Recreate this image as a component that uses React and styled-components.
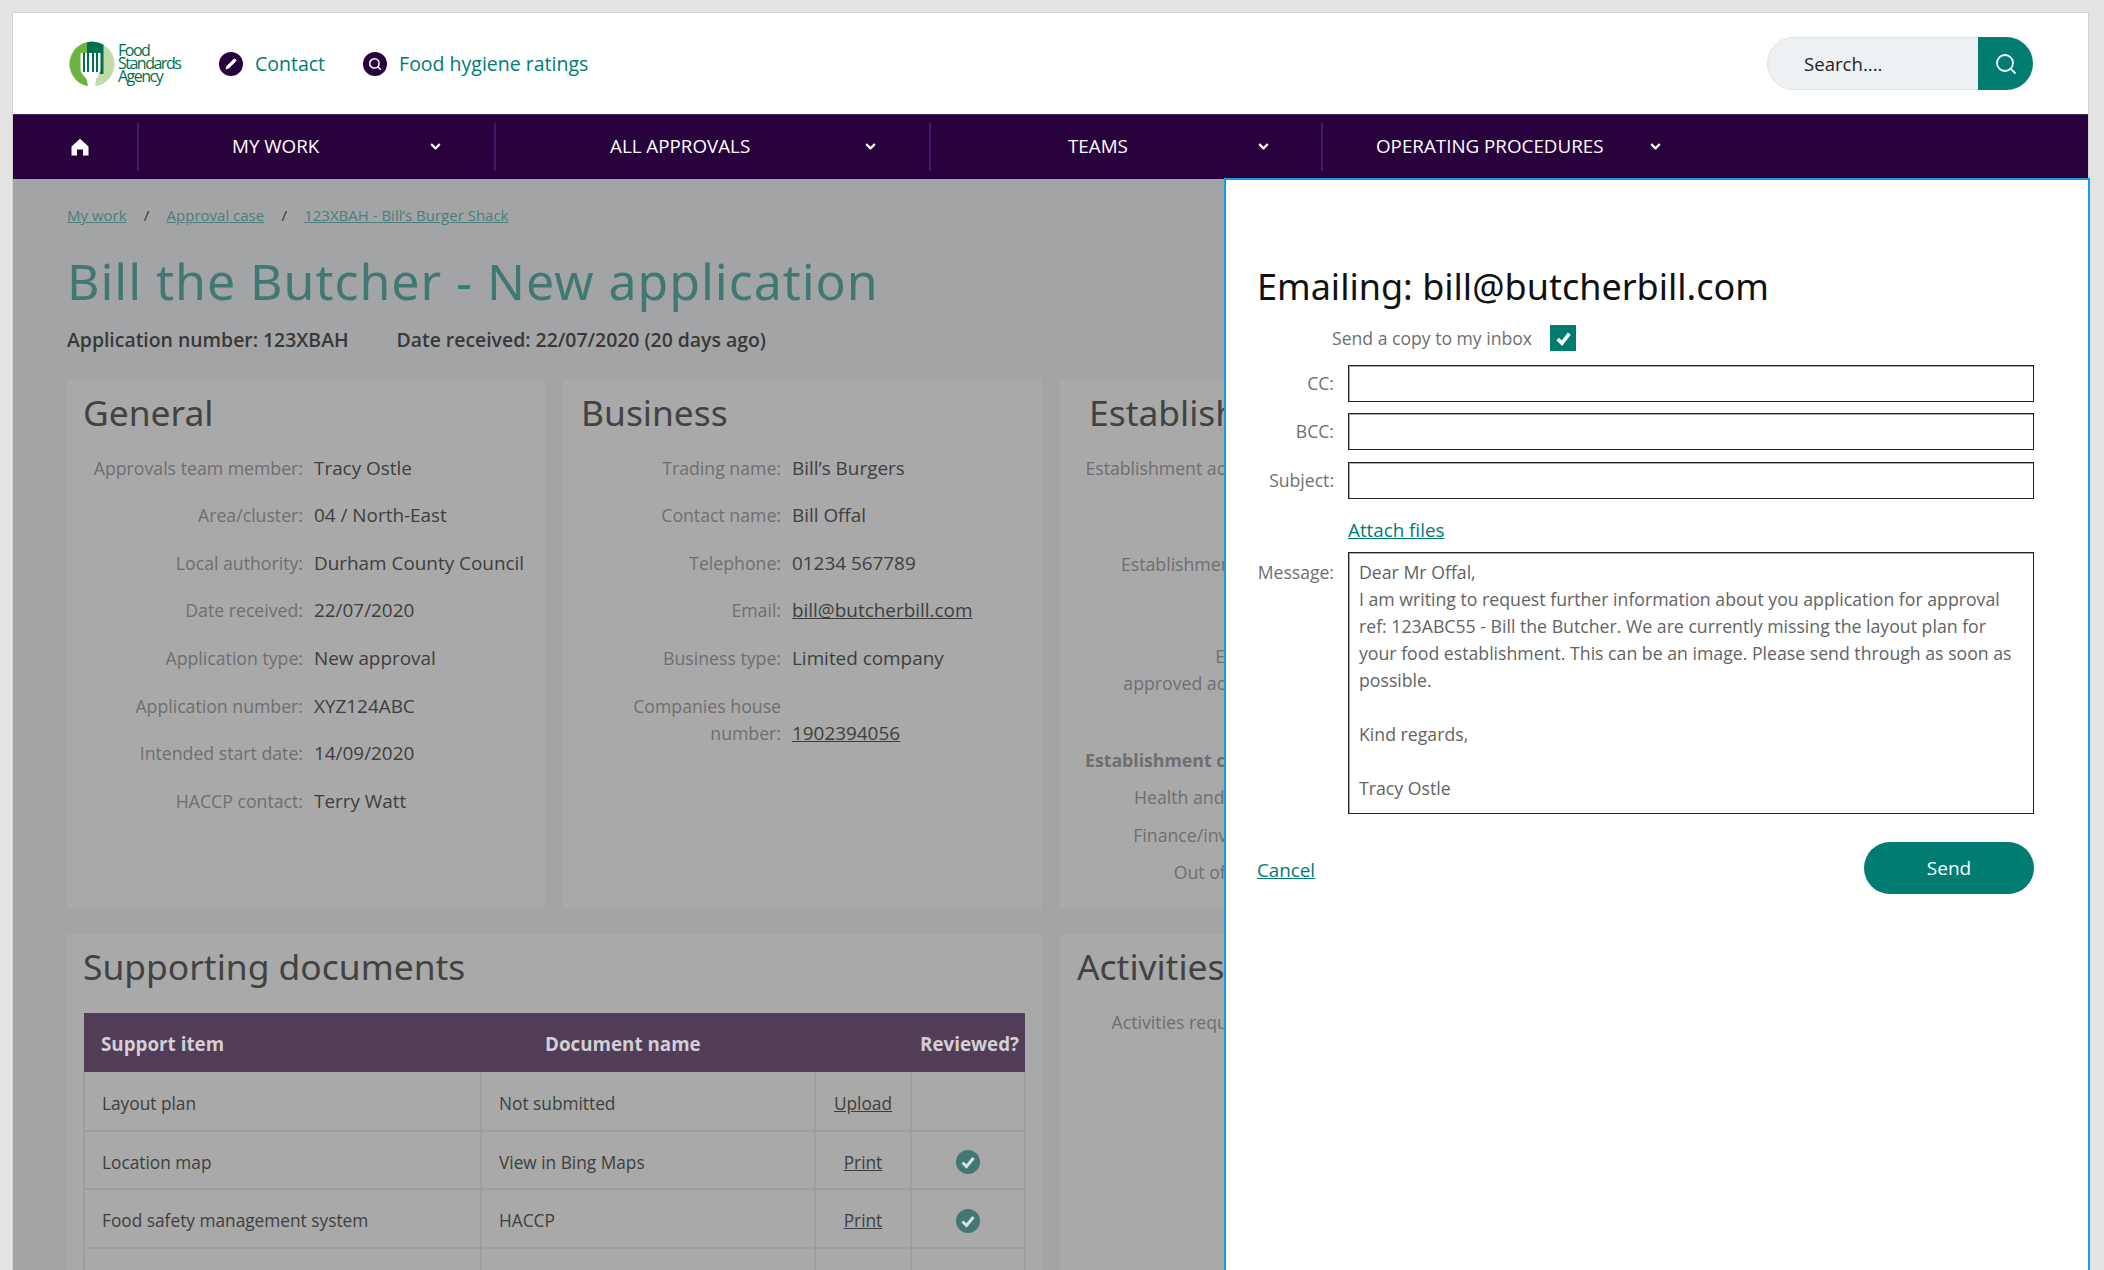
import React from "react";
import styled, { createGlobalStyle } from "styled-components";
import { ChevronDown, Search, Pencil } from "lucide-react";

const Global = createGlobalStyle`
  html, body { margin: 0; height: 100%; overflow: hidden; background: #e3e3e3; }
  body { font-family: "Open Sans", "Liberation Sans", sans-serif; color: #404040; }
  * { box-sizing: border-box; }
`;

const Page = styled.div`
  position: relative;
  margin: 12px 15px 0 12px;
  height: 1258px;
  border: 1px solid #d4d4d4;
  border-bottom: 0;
  background: #a3a4a6;
`;
const Header = styled.header`
  height: 101px;
  background: #fff;
  display: flex;
  align-items: center;
  padding: 0 55px 0 56px;
`;
const Logo = styled.div`
  display: flex;
  align-items: center;
  gap: 3px;
  margin-right: 37px;
`;
const LogoText = styled.div`
  font-size: 16px;
  font-weight: 500;
  line-height: 13px;
  letter-spacing: -1.5px;
  color: #00704f;
  width: 64px;
`;
const TopLink = styled.a`
  display: flex;
  align-items: center;
  gap: 12px;
  font-size: 19.5px;
  color: #007c71;
  margin-right: 38px;
`;
const RoundIcon = styled.span`
  width: 24px;
  height: 24px;
  border-radius: 50%;
  background: #28003c;
  color: #fff;
  display: flex;
  align-items: center;
  justify-content: center;
`;
const SearchBox = styled.div`
  margin-left: auto;
  display: flex;
  width: 266px;
  height: 53px;
`;
const SearchField = styled.div`
  flex: 1;
  background: #eef1f4;
  border: 1px solid #e2e5e8;
  border-right: 0;
  border-radius: 27px 0 0 27px;
  padding-left: 36px;
  font-size: 18.6px;
  line-height: 51px;
  color: #222;
`;
const SearchButton = styled.div`
  width: 55px;
  background: #007c71;
  border-radius: 0 27px 27px 0;
  color: #fff;
  display: flex;
  align-items: center;
  justify-content: center;
`;
const Nav = styled.nav`
  height: 65px;
  background: #28003c;
  border-top: 1px solid #4a2a5e;
  display: flex;
  align-items: center;
  color: #fff;
  font-size: 18.8px;
  line-height: 24px;
`;
const NavHome = styled.div`
  width: 126px;
  height: 48px;
  border-right: 2px solid #3d1a63;
  display: flex;
  align-items: center;
  padding-left: 58px;
`;
const NavItem = styled.div`
  display: flex;
  align-items: center;
  width: ${p => p.$w}px;
  height: 48px;
  padding-left: ${p => p.$pad}px;
  padding-bottom: 2px;
  border-right: ${p => (p.$last ? "0" : "2px solid #3d1a63")};
`;
const NavLabel = styled.span`
  margin-right: ${p => p.$gap}px;
  white-space: nowrap;
`;
const Content = styled.main`
  padding: 26px 0 0 54px;
`;
const Crumbs = styled.div`
  display: flex;
  align-items: center;
  font-size: 15px;
  height: 20px;
  color: #333;
`;
const Crumb = styled.a`
  color: #4a7f7b;
  text-decoration: underline;
`;
const Slash = styled.span`
  width: 40px;
  text-align: center;
`;
const Title = styled.h1`
  margin: 25px 0 0;
  font: 400 50px/62px "Noto Sans", sans-serif;
  letter-spacing: 0.97px;
  color: #417873;
  white-space: nowrap;
`;
const Meta = styled.div`
  display: flex;
  gap: 48px;
  margin-top: 15px;
  font-size: 19.4px;
  line-height: 26px;
  font-weight: 600;
  color: #383838;
`;
const CardGrid = styled.div`
  display: grid;
  grid-template-columns: 478px 479px 479px;
  grid-template-rows: 530px auto;
  gap: 25px 18px;
  margin-top: 26px;
`;
const Card = styled.section`
  background: #a9a9a9;
  padding: ${p => p.$top ?? 13}px 16px 0 ${p => p.$left ?? 16}px;
  grid-column: ${p => p.$span ?? "auto"};
  min-width: 0;
  overflow: hidden;
`;
const CardTitle = styled.h2`
  margin: 0;
  font: 400 35.4px/40px "Noto Sans", sans-serif;
  color: #424242;
  white-space: nowrap;
`;
const Rows = styled.div`
  margin-top: ${p => p.$top ?? 12}px;
  margin-left: ${p => p.$left ?? 0}px;
`;
const Row = styled.div`
  display: grid;
  grid-template-columns: ${p => p.$col ?? 220}px 1fr;
  column-gap: 11px;
  align-items: end;
  margin-top: ${p => p.$drop ?? 0}px;
  margin-bottom: ${p => p.$gap ?? 0}px;
  min-height: 47.6px;
  padding-bottom: 10px;
`;
const Label = styled.div`
  text-align: right;
  font-size: 17.7px;
  line-height: 27px;
  color: #6e6f70;
  font-weight: ${p => (p.$bold ? 700 : 400)};
  white-space: pre-line;
`;
const Value = styled.div`
  font-size: 18.9px;
  line-height: 27px;
  color: #3e3e3e;
  white-space: nowrap;
`;
const ValueLink = styled.a`
  text-decoration: underline;
`;
const DocTable = styled.table`
  margin-top: 27px;
  width: 941px;
  border-collapse: collapse;
  table-layout: fixed;
`;
const Th = styled.th`
  background: #523d59;
  color: #d3cfd4;
  height: 59px;
  font-size: 18.8px;
  font-weight: 700;
  text-align: left;
  padding: 3px 0 0 ${p => p.$pad}px;
  white-space: nowrap;
`;
const Td = styled.td`
  height: 58.5px;
  border: 2px solid #9d9e9f;
  border-top: 0;
  padding-top: 5px;
  padding-bottom: 0;
  padding-right: 0;
  padding-left: ${p => (p.$center ? 0 : 17)}px;
  font-size: 17.3px;
  color: #3e3e3e;
  text-align: ${p => (p.$center ? "center" : "left")};
  text-decoration: ${p => (p.$link ? "underline" : "none")};
`;
const Check = styled.svg`
  display: block;
  margin: 0 auto;
`;
const Modal = styled.aside`
  position: absolute;
  left: 1211px;
  top: 165px;
  right: -2px;
  bottom: 0;
  background: #fff;
  border: 2px solid #1a9be8;
  border-bottom: 0;
  padding: 82px 54px 0 31px;
`;
const ModalTitle = styled.h2`
  margin: 0 0 13px;
  font: 400 36px/50px "Noto Sans", sans-serif;
  color: #111;
  white-space: nowrap;
`;
const CopyRow = styled.div`
  display: flex;
  align-items: center;
  height: 26px;
  padding-left: 75px;
  gap: 18px;
  font-size: 17.6px;
  color: #6e6f70;
`;
const CheckBox = styled.span`
  width: 26px;
  height: 26px;
  background: #007c71;
  display: flex;
  align-items: center;
  justify-content: center;
`;
const FieldRow = styled.div`
  display: grid;
  grid-template-columns: 77px 1fr;
  column-gap: 14px;
  align-items: center;
  margin-top: ${p => p.$top}px;
`;
const FieldLabel = styled.label`
  font-size: 17.6px;
  color: #6e6f70;
  text-align: right;
  align-self: ${p => (p.$start ? "start" : "center")};
  padding-top: ${p => (p.$start ? 8 : 0)}px;
  padding-bottom: ${p => (p.$start ? 0 : 1)}px;
`;
const Input = styled.input`
  display: block;
  width: 100%;
  height: 37px;
  border: 1px solid #222;
  border-radius: 0;
  background: #fff;
  box-shadow: inset 1px 1px 0 #aaa;
`;
const Attach = styled.a`
  grid-column: 2;
  font-size: 18.8px;
  line-height: 26px;
  color: #007c71;
  text-decoration: underline;
`;
const Message = styled.div`
  height: 262px;
  border: 1px solid #222;
  box-shadow: inset 1px 1px 0 #aaa;
  padding: 6px 10px;
  font-size: 17.7px;
  line-height: 27px;
  color: #636363;
  white-space: pre-line;
`;
const Actions = styled.div`
  display: flex;
  align-items: center;
  justify-content: space-between;
  margin-top: 28px;
`;
const Cancel = styled.a`
  padding-top: 3px;
  font-size: 18.8px;
  color: #007c71;
  text-decoration: underline;
`;
const Send = styled.button`
  width: 170px;
  height: 52px;
  border: 0;
  border-radius: 26px;
  background: #007c71;
  color: #fff;
  font: 400 19px "Open Sans", sans-serif;
`;

const general = [
  ["Approvals team member:", "Tracy Ostle"],
  ["Area/cluster:", "04 / North-East"],
  ["Local authority:", "Durham County Council"],
  ["Date received:", "22/07/2020"],
  ["Application type:", "New approval"],
  ["Application number:", "XYZ124ABC"],
  ["Intended start date:", "14/09/2020"],
  ["HACCP contact:", "Terry Watt"],
];
const business = [
  ["Trading name:", "Bill’s Burgers"],
  ["Contact name:", "Bill Offal"],
  ["Telephone:", "01234 567789"],
  ["Email:", "bill@butcherbill.com", true],
  ["Business type:", "Limited company"],
  ["Companies house number:", "1902394056", true, 11],
];
const establishment = [
  ["Establishment activities:", 49],
  ["Establishment type:", 55],
  ["Existing:\napproved activities:", 29],
  ["Establishment contact", -10, true],
  ["Health and safety:", -10],
  ["Finance/investors:", -11],
  ["Out of hours:", 0],
];
const docs = [
  ["Layout plan", "Not submitted", "Upload", false],
  ["Location map", "View in Bing Maps", "Print", true],
  ["Food safety management system", "HACCP", "Print", true],
  ["\u00a0", "\u00a0", "\u00a0", false],
];

const FoodLogo = () => (
  <svg width="46" height="46" viewBox="0 0 46 46">
    <circle cx="23" cy="23" r="22.500" fill="#c0dba8" />
    <path d="M23 .5A22.500 22.500 0 0 0 23 45.500Z" fill="#6cb33f" />
    <path d="M18 1.500A22 22 0 0 1 34.500 3.800V33H18Z" fill="#00704f" />
    <path d="M11.500 12H14V31H16V12H18V31H20V12H23V31H25V12H27V31H29V12H31.500V28C31.500 33 28 36 27 39L26 46H19L18 39C17 36 11.500 33 11.500 28Z" fill="#fff" />
    <path d="M14 12h2v19h-2zM18 12h2v19h-2zM23 12h2v19h-2zM27 12h2v19h-2z" fill="#00704f" />
  </svg>
);
const HomeIcon = () => (
  <svg width="18" height="18" viewBox="0 0 18 18" fill="#fff">
    <path d="M9 .8 17.500 8.500V17.500H12V11.500H6V17.500H.5V8.500Z" />
  </svg>
);
const TickMark = () => (
  <svg width="17" height="17" viewBox="0 0 16 16" fill="none" stroke="#fff" strokeWidth="3.400">
    <path d="M2.500 8.500 6.500 12.500 13.500 3.500" />
  </svg>
);
const Chevron = () => <ChevronDown size={15} strokeWidth={3.4} color="#fff" />;

export default function App() {
  return (
    <>
      <Global />
      <Page>
        <Header>
          <Logo>
            <FoodLogo />
            <LogoText>Food Standards Agency</LogoText>
          </Logo>
          <TopLink>
            <RoundIcon><Pencil size={12} fill="#fff" strokeWidth={1.5} /></RoundIcon>
            Contact
          </TopLink>
          <TopLink>
            <RoundIcon><Search size={14} strokeWidth={2.6} /></RoundIcon>
            Food hygiene ratings
          </TopLink>
          <SearchBox>
            <SearchField>Search....</SearchField>
            <SearchButton><Search size={24} strokeWidth={1.8} /></SearchButton>
          </SearchBox>
        </Header>
        <Nav>
          <NavHome><HomeIcon /></NavHome>
          <NavItem $w={357} $pad={93}><NavLabel $gap={109}>MY WORK</NavLabel><Chevron /></NavItem>
          <NavItem $w={435} $pad={114}><NavLabel $gap={113}>ALL APPROVALS</NavLabel><Chevron /></NavItem>
          <NavItem $w={392} $pad={137}><NavLabel $gap={128}>TEAMS</NavLabel><Chevron /></NavItem>
          <NavItem $w={500} $pad={53} $last><NavLabel $gap={45}>OPERATING PROCEDURES</NavLabel><Chevron /></NavItem>
        </Nav>
        <Content>
          <Crumbs>
            <Crumb>My work</Crumb><Slash>/</Slash>
            <Crumb>Approval case</Crumb><Slash>/</Slash>
            <Crumb>123XBAH - Bill’s Burger Shack</Crumb>
          </Crumbs>
          <Title>Bill the Butcher - New application</Title>
          <Meta>
            <span>Application number: 123XBAH</span>
            <span>Date received: 22/07/2020 (20 days ago)</span>
          </Meta>
          <CardGrid>
            <Card>
              <CardTitle>General</CardTitle>
              <Rows>
                {general.map(([l, v]) => (
                  <Row key={l}><Label>{l}</Label><Value>{v}</Value></Row>
                ))}
              </Rows>
            </Card>
            <Card $left={18}>
              <CardTitle>Business</CardTitle>
              <Rows>
                {business.map(([l, v, link, drop]) => (
                  <Row key={l} $col={200} $drop={drop}>
                    <Label>{l}</Label>
                    <Value>{link ? <ValueLink>{v}</ValueLink> : v}</Value>
                  </Row>
                ))}
              </Rows>
            </Card>
            <Card $left={29}>
              <CardTitle>Establishment</CardTitle>
              <Rows $left={-9}>
                {establishment.map(([l, g, b]) => (
                  <Row key={l} $gap={g} $col={203}>
                    <Label $bold={b}>{l}</Label><Value />
                  </Row>
                ))}
              </Rows>
            </Card>
            <Card $span="span 2" $top={12}>
              <CardTitle>Supporting documents</CardTitle>
              <DocTable>
                <colgroup>
                  <col width="397" /><col width="334" /><col width="96" /><col width="114" />
                </colgroup>
                <thead>
                  <tr>
                    <Th $pad={17}>Support item</Th>
                    <Th $pad={64}>Document name</Th>
                    <Th />
                    <Th $pad={9}>Reviewed?</Th>
                  </tr>
                </thead>
                <tbody>
                  {docs.map(([a, b, c, ok], i) => (
                    <tr key={i}>
                      <Td>{a}</Td>
                      <Td>{b}</Td>
                      <Td $center $link>{c}</Td>
                      <Td $center>
                        {ok && (
                          <Check width="24" height="24" viewBox="0 0 24 24">
                            <circle cx="12" cy="12" r="12" fill="#417873" />
                            <path d="M6.500 12.500 10.500 16.500 17.500 8" fill="none" stroke="#d8e3e1" strokeWidth="3" />
                          </Check>
                        )}
                      </Td>
                    </tr>
                  ))}
                </tbody>
              </DocTable>
            </Card>
            <Card $top={12} $left={17}>
              <CardTitle>Activities</CardTitle>
              <Rows $left={-10} $top={12}>
                <Row $col={198}><Label>Activities required:</Label><Value /></Row>
              </Rows>
            </Card>
          </CardGrid>
        </Content>
        <Modal>
          <ModalTitle>Emailing: bill@butcherbill.com</ModalTitle>
          <CopyRow>
            Send a copy to my inbox
            <CheckBox><TickMark /></CheckBox>
          </CopyRow>
          <FieldRow $top={14}><FieldLabel>CC:</FieldLabel><Input /></FieldRow>
          <FieldRow $top={11}><FieldLabel>BCC:</FieldLabel><Input /></FieldRow>
          <FieldRow $top={12}><FieldLabel>Subject:</FieldLabel><Input /></FieldRow>
          <FieldRow $top={18}><Attach>Attach files</Attach></FieldRow>
          <FieldRow $top={9}>
            <FieldLabel $start>Message:</FieldLabel>
            <Message>{`Dear Mr Offal,
I am writing to request further information about you application for approval ref: 123ABC55 - Bill the Butcher. We are currently missing the layout plan for your food establishment. This can be an image. Please send through as soon as possible.

Kind regards,

Tracy Ostle`}</Message>
          </FieldRow>
          <Actions>
            <Cancel>Cancel</Cancel>
            <Send>Send</Send>
          </Actions>
        </Modal>
      </Page>
    </>
  );
}
